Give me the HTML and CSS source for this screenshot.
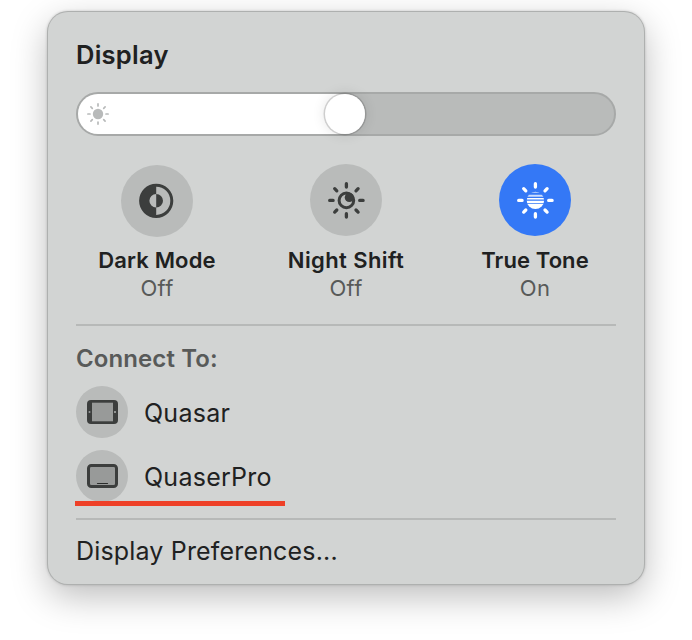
FILE: index.html
```
<!DOCTYPE html>
<html lang="en">
<head>
<meta charset="utf-8">
<title>Display</title>
<link rel="stylesheet" href="styles.css">
</head>
<body>
<main class="panel">
  <h1 class="title"><span>Display</span></h1>
  <div class="slider">
    <div class="fill">
      <svg class="sun" width="24" height="24" viewBox="-12 -12 24 24">
        <circle r="5.2" fill="#b8baba"/>
        <g stroke="#b8baba" stroke-width="1.7" stroke-linecap="round">
          <path d="M0-10.1V-8M0 8V10.1M-10.1 0H-8M8 0H10.1M-7.1-7.1L-5.7-5.7M5.7 5.7L7.1 7.1M-7.1 7.1L-5.7 5.7M5.7-5.7L7.1-7.1"/>
        </g>
      </svg>
      <div class="knob"></div>
    </div>
  </div>
  <section class="modes">
    <div class="mode">
      <div class="disc disc-low">
        <svg width="40" height="40" viewBox="-20 -20 40 40">
          <g transform="translate(-.8 -.2)">
            <circle r="15.6" fill="none" stroke="#3c3e3d" stroke-width="3"/>
            <path d="M0-16A16 16 0 0 0 0 16V6.8A6.8 6.8 0 0 1 0-6.8ZM0-6.8A6.8 6.8 0 0 1 0 6.8Z" fill="#3c3e3d"/>
          </g>
        </svg>
      </div>
      <div class="name dark">Dark Mode</div>
      <div class="state">Off</div>
    </div>
    <div class="mode">
      <div class="disc">
        <svg width="40" height="40" viewBox="-20 -20 40 40">
          <circle cx=".4" cy=".4" r="7.3" fill="none" stroke="#3c3e3d" stroke-width="3"/>
          <circle cx="3.3" cy="-2.6" r="4.6" fill="#3c3e3d"/>
          <path transform="translate(.4 .4)" d="M0-16.7V-13.3M0 13.3V16.7M-16.7 0H-13.3M13.3 0H16.7M-11.7-11.7L-9.6-9.6M9.6 9.6L11.7 11.7M-11.7 11.7L-9.6 9.6M9.6-9.6L11.7-11.7" stroke="#3c3e3d" stroke-width="3.3" stroke-linecap="round"/>
        </svg>
      </div>
      <div class="name night">Night Shift</div>
      <div class="state">Off</div>
    </div>
    <div class="mode">
      <div class="disc disc-on">
        <svg width="40" height="40" viewBox="-20 -20 40 40">
          <defs><clipPath id="orb"><circle cx=".4" cy=".4" r="8.7"/></clipPath></defs>
          <g clip-path="url(#orb)" fill="#fff">
            <path d="M-10-9H10V-7.2H-10Z" opacity=".75"/>
            <path d="M-10-5.3H10V-3.3H-10Z" opacity=".75"/>
            <path d="M-10-2H10V-.4H-10ZM-10 .7H10V3.2H-10ZM-10 4.1H10V10H-10Z"/>
          </g>
          <path transform="translate(.4 .4)" d="M0-16.7V-13.3M0 13.3V16.7M-16.7 0H-13.3M13.3 0H16.7M-11.7-11.7L-9.6-9.6M9.6 9.6L11.7 11.7M-11.7 11.7L-9.6 9.6M9.6-9.6L11.7-11.7" stroke="#fff" stroke-width="3.3" stroke-linecap="round"/>
        </svg>
      </div>
      <div class="name tone">True Tone</div>
      <div class="state">On</div>
    </div>
  </section>
  <section class="connect">
    <h2 class="heading"><span>Connect To:</span></h2>
    <div class="device">
      <div class="badge">
        <svg width="32" height="26" viewBox="0 0 32 26">
          <rect x="1" y="1" width="31" height="24" rx="4" fill="#3c3e3d"/>
          <rect x="6" y="3.7" width="21" height="18.6" fill="#989a99"/>
          <circle cx="3.5" cy="13" r="1" fill="#989a99"/>
          <circle cx="29" cy="13" r="1.1" fill="#a8aaa9"/>
        </svg>
      </div>
      <span class="device-name">Quasar</span>
    </div>
    <div class="device device-marked">
      <div class="badge">
        <svg width="32" height="26" viewBox="0 0 32 26">
          <rect x="2.5" y="2.5" width="28" height="21" rx="2.8" fill="#989a99" stroke="#3c3e3d" stroke-width="3"/>
          <path d="M11.5 20.5H21.5" stroke="#2a2c2b" stroke-width="1.2" stroke-linecap="round"/>
        </svg>
      </div>
      <span class="device-name pro">QuaserPro</span>
    </div>
  </section>
  <div class="prefs"><span>Display Preferences...</span></div>
</main>
</body>
</html>
```
FILE: styles.css
```
* { box-sizing: border-box; }
body {
  margin: 0;
  height: 640px;
  overflow: hidden;
  background: #fff;
  font-family: Inter, "Liberation Sans", sans-serif;
  color: #202121;
}
.panel {
  width: 596px;
  height: 572px;
  margin: 12px 0 0 48px;
  padding: 23px 28px 0;
  border-radius: 20px;
  background: #d2d4d3;
  box-shadow: 0 0 0 1px #aeb0af, 0 0 3px 1px rgba(0,0,0,.18), 0 12px 36px rgba(0,0,0,.27);
}
.title, .heading { margin: 0; }
.title {
  height: 40px;
  line-height: 40px;
  font-size: 25.5px;
  font-weight: 600;
  letter-spacing: .25px;
}
.slider {
  height: 44px;
  margin-top: 17px;
  border: 2px solid #a7a9a8;
  border-radius: 22px;
  background: #b9bbba;
}
.fill {
  display: flex;
  align-items: center;
  justify-content: space-between;
  width: 287px;
  height: 40px;
  padding-left: 8px;
  border-radius: 20px;
  background: #fff;
}
.knob {
  width: 40px;
  height: 40px;
  border-radius: 50%;
  background: #fff;
  box-shadow: 0 0 0 1.5px rgba(0,0,0,.15), 0 0 14px rgba(0,0,0,.12);
}
.modes {
  display: grid;
  grid-template-columns: repeat(3, 189px);
  margin: 28px -13.5px 0;
  height: 160px;
}
.mode {
  display: flex;
  flex-direction: column;
  align-items: center;
}
.disc, .badge {
  display: flex;
  align-items: center;
  justify-content: center;
  flex: none;
  border-radius: 50%;
  background: #b9bbba;
}
.disc { width: 72px; height: 72px; }
.disc-low { margin: 1px 0 -1px; }
.disc-on { background: #3478f6; }
.name {
  margin-top: 10px;
  line-height: 28px;
  font-size: 22px;
  font-weight: 600;
}
.dark { letter-spacing: .15px; }
.night { letter-spacing: .4px; }
.tone { letter-spacing: .1px; }
.state {
  line-height: 28px;
  font-size: 22px;
  letter-spacing: .3px;
  color: #585a59;
}
.connect {
  height: 196px;
  border-top: 2px solid #b7b9b8;
  border-bottom: 2px solid #b7b9b8;
}
.heading {
  height: 60px;
  line-height: 66px;
  font-size: 24px;
  font-weight: 600;
  letter-spacing: .1px;
  color: #585a59;
}
.device {
  display: flex;
  align-items: center;
  gap: 16px;
  height: 52px;
  margin-bottom: 12px;
  font-size: 25px;
  letter-spacing: .25px;
}
.device-name { padding-top: 2px; }
.badge { width: 52px; height: 52px; }
.device-marked { position: relative; }
.device-marked::after {
  content: "";
  position: absolute;
  left: -1px;
  top: 51px;
  width: 210px;
  height: 5px;
  background: #ee4027;
}
.prefs {
  line-height: 62px;
  font-size: 25px;
  letter-spacing: .17px;
}
```
